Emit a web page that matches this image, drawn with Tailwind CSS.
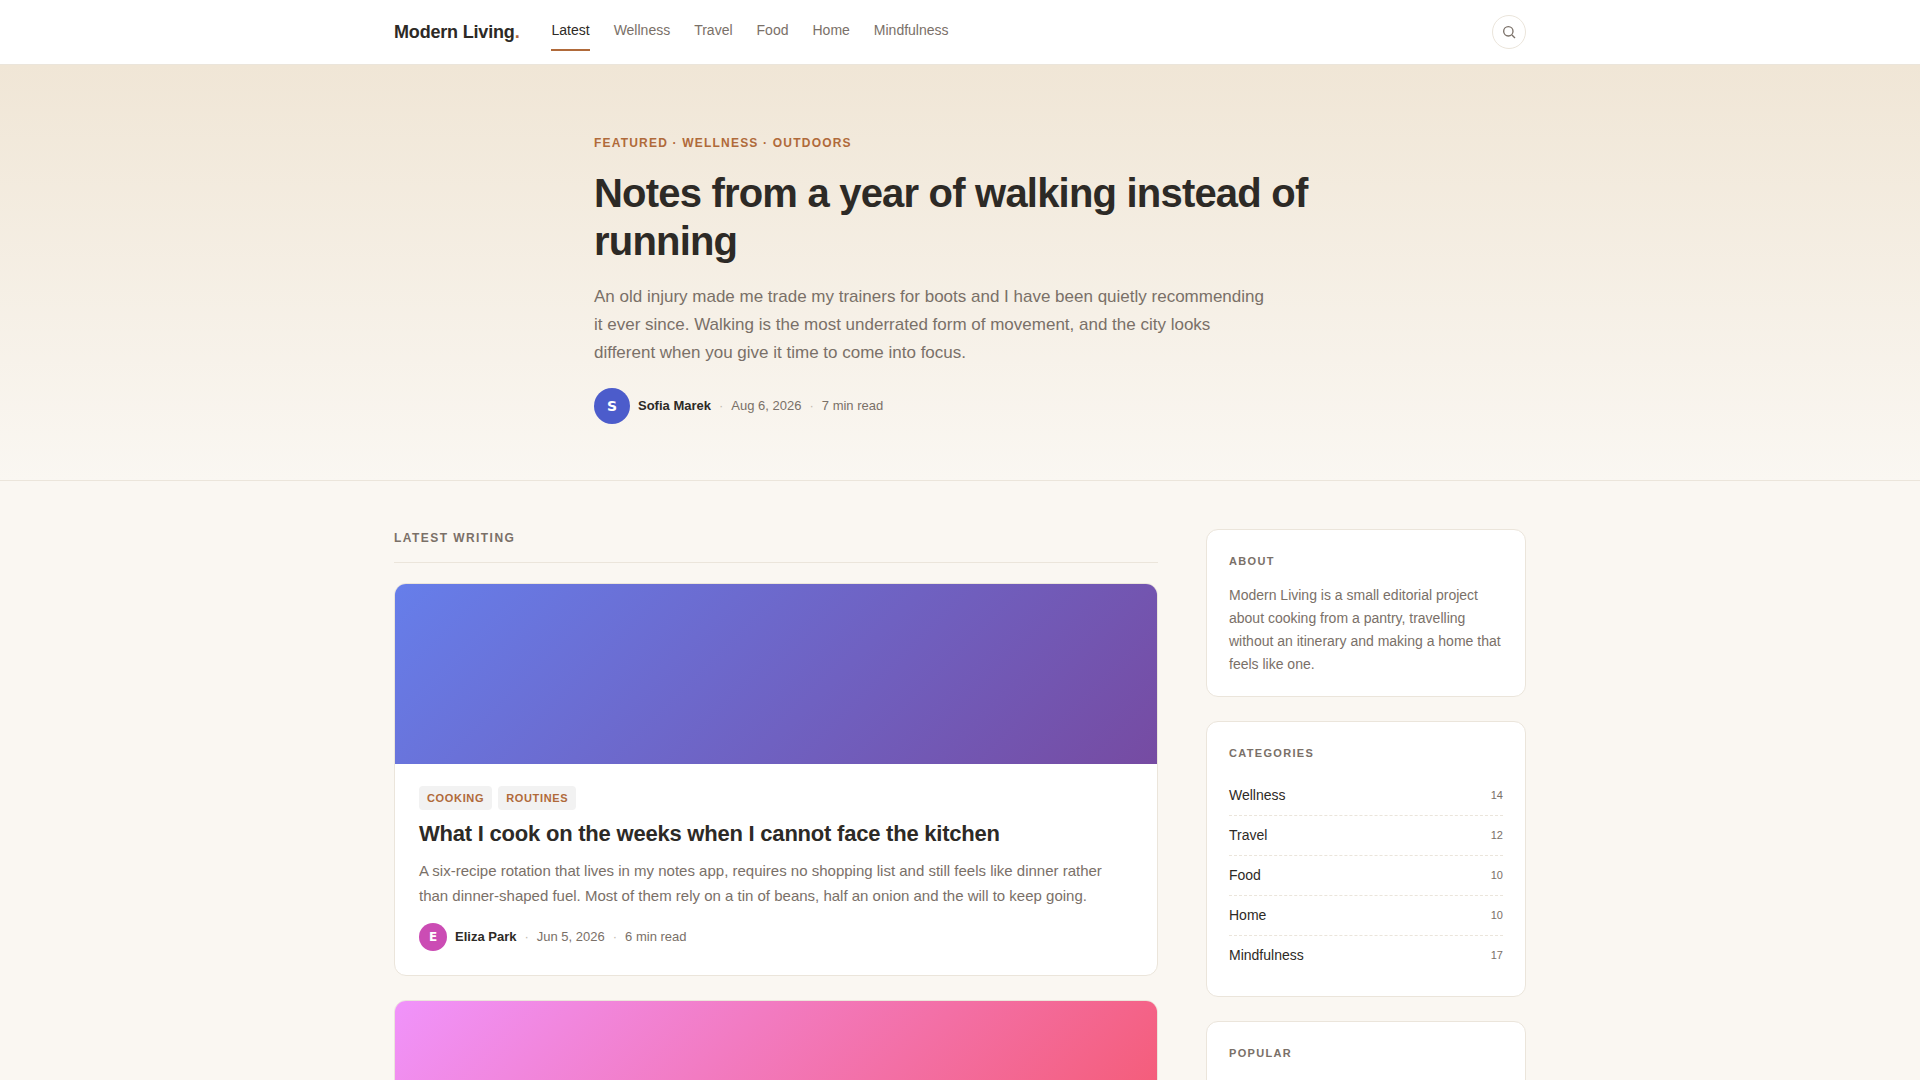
<!DOCTYPE html>
<html lang="en">
<head>
    <meta charset="UTF-8">
    <meta name="viewport" content="width=device-width, initial-scale=1.0">
    <title>Modern Living</title>
    <script src="https://cdn.jsdelivr.net/npm/@tailwindcss/browser@4"></script>
</head>
<body class="bg-[#faf7f2] text-[#2d2a26] font-['Liberation_Sans',Arial,sans-serif]">

    <!-- Header -->
    <header class="bg-white border-b border-[#ebe5db]">
        <div class="max-w-[1180px] h-16 mx-auto px-6 flex items-center gap-8">
            <a href="#" class="text-lg leading-[29px] font-bold tracking-[-0.01em]">Modern Living<span class="text-[#b06a3a]">.</span></a>
            <nav class="flex gap-6 text-sm leading-[23px] text-[#7a7068]">
                <a href="#" class="pt-1.5 pb-[7px] border-b-2 border-[#b06a3a] text-[#2d2a26]">Latest</a>
                <a href="#" class="pt-1.5 pb-[7px] border-b-2 border-transparent">Wellness</a>
                <a href="#" class="pt-1.5 pb-[7px] border-b-2 border-transparent">Travel</a>
                <a href="#" class="pt-1.5 pb-[7px] border-b-2 border-transparent">Food</a>
                <a href="#" class="pt-1.5 pb-[7px] border-b-2 border-transparent">Home</a>
                <a href="#" class="pt-1.5 pb-[7px] border-b-2 border-transparent">Mindfulness</a>
            </nav>
            <button type="button" aria-label="Search" class="ml-auto size-[34px] rounded-full border border-[#ebe5db] flex items-center justify-center text-[#7a7068]">
                <svg class="size-4" viewBox="0 0 24 24" fill="none" stroke="currentColor" stroke-width="2">
                    <circle cx="11" cy="11" r="7"/>
                    <path d="m21 21-4.5-4.5"/>
                </svg>
            </button>
        </div>
    </header>

    <!-- Featured story -->
    <section class="bg-linear-to-b from-[#f0e6d6] to-[#faf7f2] border-b border-[#ebe5db]">
        <div class="max-w-[780px] mx-auto px-6 pt-[68px] pb-14">
            <p class="mb-4 text-xs leading-5 font-bold uppercase tracking-[0.1em] text-[#b06a3a]">Featured · Wellness · Outdoors</p>
            <h1 class="mb-[18px] text-[40px] leading-12 font-bold tracking-[-0.02em]">Notes from a year of walking instead of running</h1>
            <p class="mb-[21px] max-w-[680px] text-[17px] leading-7 text-[#7a7068]">An old injury made me trade my trainers for boots and I have been quietly recommending it ever since. Walking is the most underrated form of movement, and the city looks different when you give it time to come into focus.</p>
            <div class="flex items-center gap-2 text-[13px] text-[#7a7068]">
                <span class="size-9 rounded-full bg-[#4c5ccb] text-white text-sm font-bold font-['DejaVu_Sans',sans-serif] flex items-center justify-center">S</span>
                <span class="font-bold text-[#2d2a26]">Sofia Marek</span>
                <span class="text-[#c4bcb0]">·</span>
                <span>Aug 6, 2026</span>
                <span class="text-[#c4bcb0]">·</span>
                <span>7 min read</span>
            </div>
        </div>
    </section>

    <div class="max-w-[1180px] mx-auto px-6 pt-12 grid grid-cols-[minmax(0,1fr)_320px] gap-12">

        <!-- Articles -->
        <main>
            <h2 class="mb-5 pb-[15px] border-b border-[#ebe5db] text-xs leading-[18px] font-bold uppercase tracking-[0.12em] text-[#7a7068]">Latest writing</h2>

            <div class="flex flex-col gap-6">
                <article class="bg-white border border-[#ebe5db] rounded-xl overflow-hidden">
                    <div class="h-45 bg-[linear-gradient(135deg,#667eea_0%,#764ba2_100%)]"></div>
                    <div class="px-6 pt-[22px] pb-6">
                        <div class="mb-[9px] flex gap-1.5 text-[11px] leading-[18px] font-bold uppercase tracking-[0.06em] text-[#b06a3a]">
                            <span class="px-2 py-[3px] rounded-sm bg-[#f2f2f2]">Cooking</span>
                            <span class="px-2 py-[3px] rounded-sm bg-[#f2f2f2]">Routines</span>
                        </div>
                        <h3 class="mb-2.5 text-[22px] leading-[29px] font-bold tracking-[-0.01em]"><a href="#">What I cook on the weeks when I cannot face the kitchen</a></h3>
                        <p class="mb-[15px] text-[15px] leading-[25px] text-[#7a7068]">A six-recipe rotation that lives in my notes app, requires no shopping list and still feels like dinner rather than dinner-shaped fuel. Most of them rely on a tin of beans, half an onion and the will to keep going.</p>
                        <div class="flex items-center gap-2 text-[13px] text-[#7a7068]">
                            <span class="size-7 rounded-full bg-[#cb4cb4] text-white text-xs font-bold font-['DejaVu_Sans',sans-serif] flex items-center justify-center">E</span>
                            <span class="font-bold text-[#2d2a26]">Eliza Park</span>
                            <span class="text-[#c4bcb0]">·</span>
                            <span>Jun 5, 2026</span>
                            <span class="text-[#c4bcb0]">·</span>
                            <span>6 min read</span>
                        </div>
                    </div>
                </article>

                <article class="bg-white border border-[#ebe5db] rounded-xl overflow-hidden">
                    <div class="h-45 bg-[linear-gradient(135deg,#f093fb_0%,#f5576c_100%)]"></div>
                </article>
            </div>
        </main>

        <!-- Sidebar -->
        <aside class="flex flex-col gap-6">
            <section class="px-[22px] pt-[22px] pb-5 bg-white border border-[#ebe5db] rounded-xl">
                <h2 class="mb-3.5 text-[11px] leading-[18px] font-bold uppercase tracking-[0.12em] text-[#7a7068]">About</h2>
                <p class="text-sm leading-[23px] text-[#7a7068]">Modern Living is a small editorial project about cooking from a pantry, travelling without an itinerary and making a home that feels like one.</p>
            </section>

            <section class="px-[22px] pt-[22px] pb-5 bg-white border border-[#ebe5db] rounded-xl">
                <h2 class="mb-3.5 text-[11px] leading-[18px] font-bold uppercase tracking-[0.12em] text-[#7a7068]">Categories</h2>
                <ul class="text-sm leading-[23px]">
                    <li class="py-2 flex items-center justify-between border-b border-dashed border-[#ebe5db]"><a href="#">Wellness</a><span class="text-[11px] text-[#7a7068]">14</span></li>
                    <li class="py-2 flex items-center justify-between border-b border-dashed border-[#ebe5db]"><a href="#">Travel</a><span class="text-[11px] text-[#7a7068]">12</span></li>
                    <li class="py-2 flex items-center justify-between border-b border-dashed border-[#ebe5db]"><a href="#">Food</a><span class="text-[11px] text-[#7a7068]">10</span></li>
                    <li class="py-2 flex items-center justify-between border-b border-dashed border-[#ebe5db]"><a href="#">Home</a><span class="text-[11px] text-[#7a7068]">10</span></li>
                    <li class="py-2 flex items-center justify-between border-b border-transparent"><a href="#">Mindfulness</a><span class="text-[11px] text-[#7a7068]">17</span></li>
                </ul>
            </section>

            <section class="grow px-[22px] pt-[22px] pb-5 bg-white border border-[#ebe5db] rounded-xl">
                <h2 class="text-[11px] leading-[18px] font-bold uppercase tracking-[0.12em] text-[#7a7068]">Popular</h2>
            </section>
        </aside>
    </div>
</body>
</html>
